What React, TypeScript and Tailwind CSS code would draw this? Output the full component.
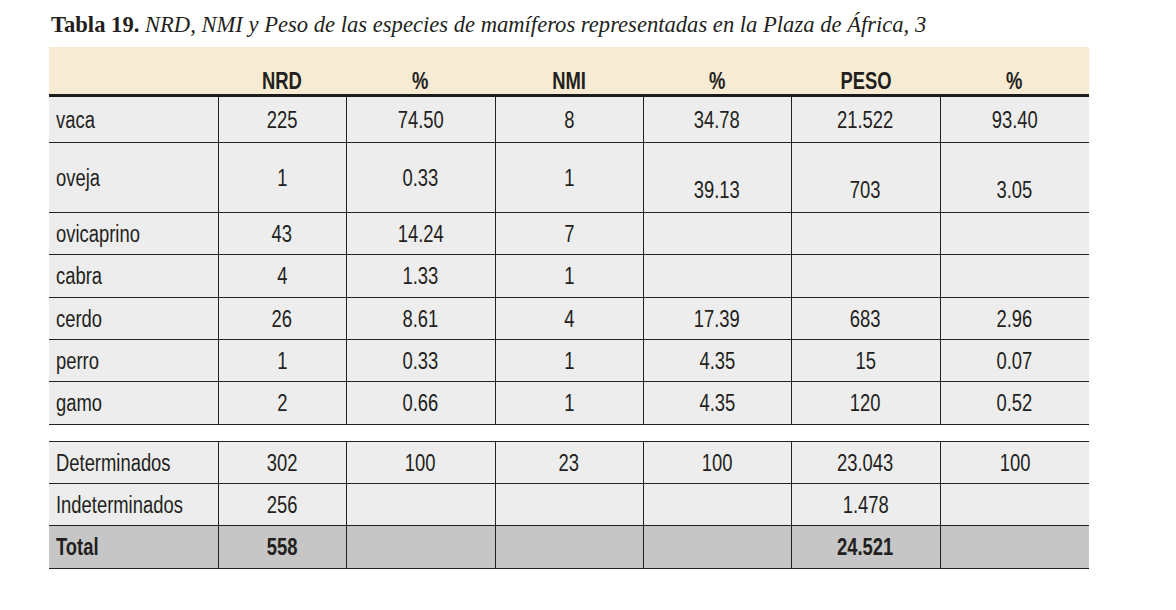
const rows = [
  { name: "vaca", v: ["225", "74.50", "8", "34.78", "21.522", "93.40"], h: "h-[47px]" },
  { name: "oveja", v: ["1", "0.33", "1", "39.13", "703", "3.05"], h: "h-[70px]", low: true },
  { name: "ovicaprino", v: ["43", "14.24", "7", "", "", ""], h: "h-[42px]" },
  { name: "cabra", v: ["4", "1.33", "1", "", "", ""], h: "h-[43px]" },
  { name: "cerdo", v: ["26", "8.61", "4", "17.39", "683", "2.96"], h: "h-[42px]" },
  { name: "perro", v: ["1", "0.33", "1", "4.35", "15", "0.07"], h: "h-[42px]" },
  { name: "gamo", v: ["2", "0.66", "1", "4.35", "120", "0.52"], h: "h-[43px]" },
];

const totals = [
  { name: "Determinados", v: ["302", "100", "23", "100", "23.043", "100"], h: "h-[42px]" },
  { name: "Indeterminados", v: ["256", "", "", "", "1.478", ""], h: "h-[42px]" },
];

const headers = ["NRD", "%", "NMI", "%", "PESO", "%"];

// condensed look: Liberation Sans squeezed horizontally
function N({ children, left }: { children: React.ReactNode; left?: boolean }) {
  return (
    <span className={`inline-block whitespace-nowrap scale-x-[0.8] ${left ? "origin-left" : "origin-center"}`}>
      {children}
    </span>
  );
}

function Cols() {
  return (
    <colgroup>
      <col className="w-[169px]" />
      <col className="w-[128px]" />
      <col className="w-[149px]" />
      <col className="w-[148px]" />
      <col className="w-[148px]" />
      <col className="w-[149px]" />
      <col className="w-[149px]" />
    </colgroup>
  );
}

export default function App() {
  return (
    <div className="w-[1176px] h-[610px] bg-white text-[#231f20] pl-[49px] pt-[11px]">
      <h1 className="font-['Liberation_Serif',serif] text-[22.6px] leading-[27px] pl-[2px]">
        <span className="font-bold">Tabla 19.</span>{" "}
        <span className="italic">NRD, NMI y Peso de las especies de mamíferos representadas en la Plaza de África, 3</span>
      </h1>

      <table className="mt-[9px] w-[1040px] table-fixed border-collapse font-['Liberation_Sans',Arial,sans-serif] text-[23px]">
        <Cols />
        <thead>
          <tr className="h-[48px] bg-[#f7ebd3] border-b-[3px] border-[#1c1c1c]">
            <th />
            {headers.map((h, i) => (
              <th key={i} className="align-bottom pb-[1px] font-bold text-center leading-[24px]">
                <N>{h}</N>
              </th>
            ))}
          </tr>
        </thead>
        <tbody>
          {rows.map((r) => (
            <tr key={r.name} className={`${r.h} bg-[#ededed] border-b border-[#222]`}>
              <td className="pl-[7px] leading-[24px] pt-[1px]">
                <N left>{r.name}</N>
              </td>
              {r.v.map((x, i) => (
                <td
                  key={i}
                  className={`border-l border-[#222] text-center leading-[24px] ${
                    r.low && i >= 3 ? "pt-[26px]" : "pt-[1px]"
                  }`}
                >
                  <N>{x}</N>
                </td>
              ))}
            </tr>
          ))}
          <tr className="h-[17px] bg-white border-b border-[#222]">
            <td colSpan={7} />
          </tr>
          {totals.map((r) => (
            <tr key={r.name} className={`${r.h} bg-[#ededed] border-b border-[#222]`}>
              <td className="pl-[7px] leading-[24px] pt-[1px]">
                <N left>{r.name}</N>
              </td>
              {r.v.map((x, i) => (
                <td key={i} className="border-l border-[#222] text-center leading-[24px] pt-[1px]">
                  <N>{x}</N>
                </td>
              ))}
            </tr>
          ))}
          <tr className="h-[43px] bg-[#c6c6c6] border-b border-[#222] font-bold">
            <td className="pl-[7px] leading-[24px] pt-[1px]">
              <N left>Total</N>
            </td>
            {["558", "", "", "", "24.521", ""].map((x, i) => (
              <td key={i} className="border-l border-[#222] text-center leading-[24px] pt-[1px]">
                <N>{x}</N>
              </td>
            ))}
          </tr>
        </tbody>
      </table>
    </div>
  );
}
